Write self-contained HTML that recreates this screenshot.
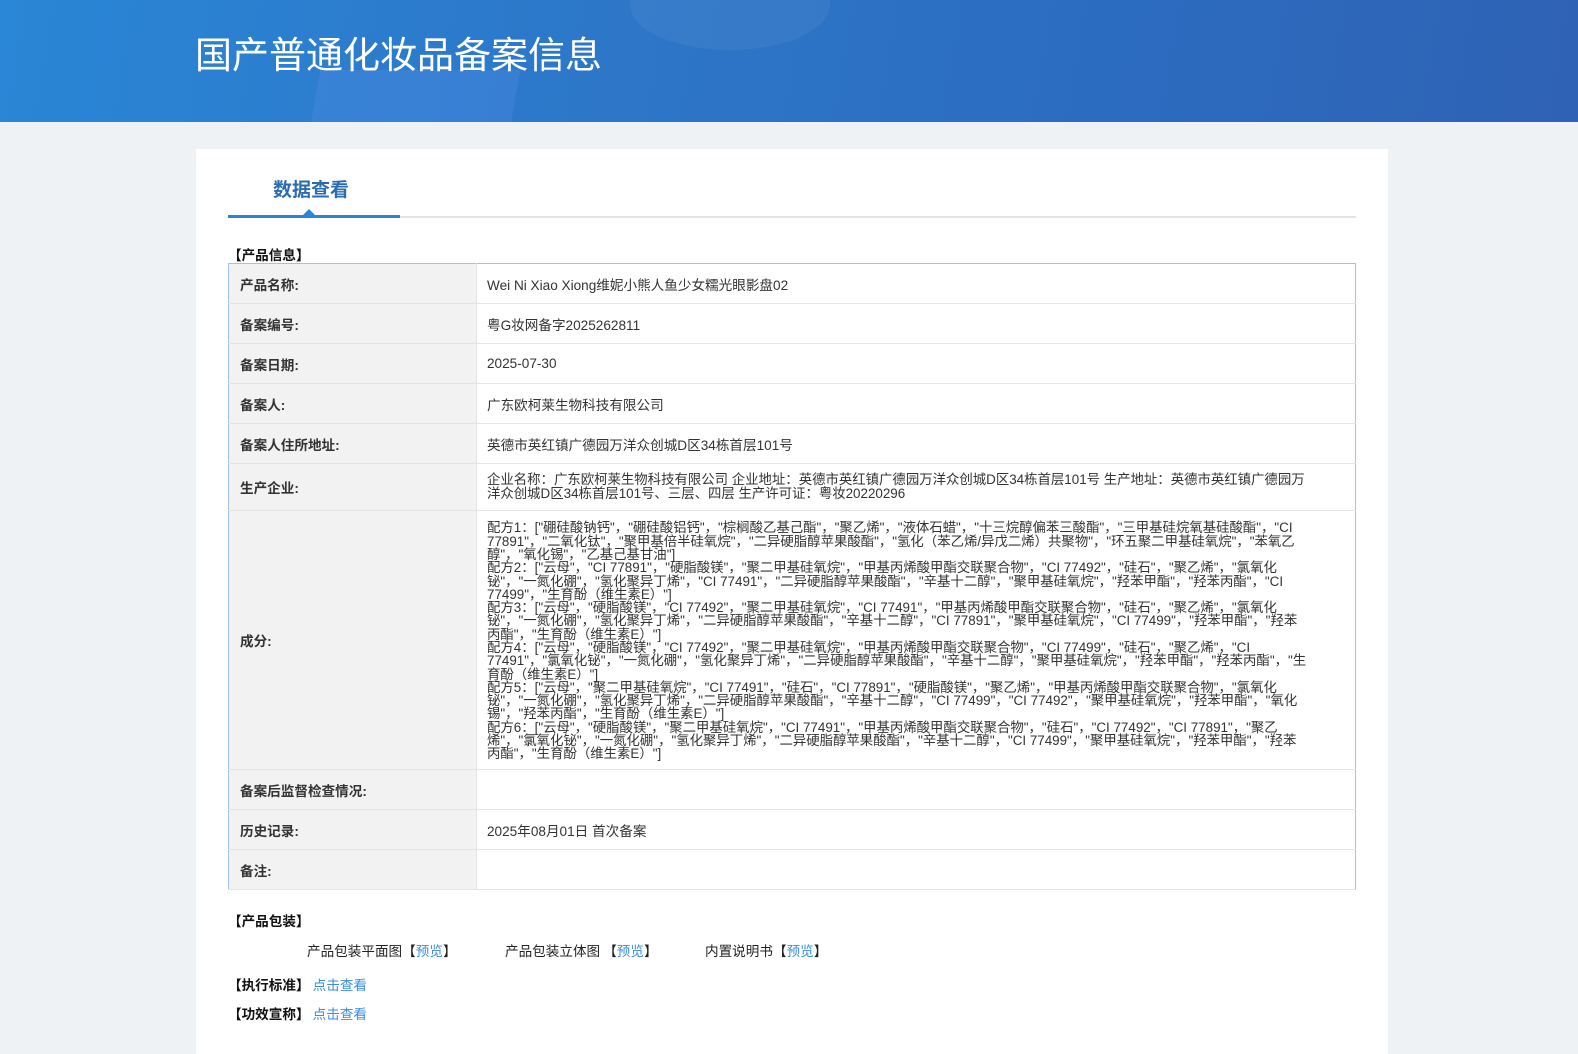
<!DOCTYPE html>
<html><head><meta charset="utf-8"><style>
*{margin:0;padding:0;box-sizing:border-box}
body{width:1578px;height:1054px;overflow:hidden;background:#eef2f5;font-family:"Liberation Sans","Noto Sans CJK SC",sans-serif;color:#333;position:relative}
.hdr{position:absolute;left:0;top:0;width:1578px;height:122px;background:linear-gradient(100deg,#2a86d6 0%,#2d76c8 40%,#2c6cc0 70%,#2f62b4 100%);overflow:hidden}
.hdr .s1{position:absolute;left:315px;top:70px;width:200px;height:60px;background:rgba(80,140,230,.35);transform:skewX(-10deg)}
.hdr .s2{position:absolute;left:630px;top:-40px;width:200px;height:90px;border-radius:50%;background:rgba(255,255,255,.05)}
.hdr h1{position:absolute;left:195px;top:25px;font-size:37px;font-weight:normal;color:#fff;font-family:"Noto Sans CJK SC",sans-serif}
.card{position:absolute;left:196px;top:149px;width:1192px;height:905px;background:#fff}
.tab{position:absolute;left:273px;top:175px;font-size:19px;font-weight:bold;color:#2a6cb0;font-family:"Noto Sans CJK SC",sans-serif}
.line{position:absolute;left:228px;top:216px;width:1128px;height:2px;background:#e4e4e4}
.line2{position:absolute;left:228px;top:215px;width:172px;height:3px;background:#2a85d6}
.tri{position:absolute;left:303px;top:209px;width:0;height:0;border-left:6px solid transparent;border-right:6px solid transparent;border-bottom:6px solid #2a85d6}
.sec{position:absolute;left:228px;font-size:13.6px;font-weight:bold;color:#111;font-family:"Noto Sans CJK SC",sans-serif}
table{position:absolute;left:228px;top:263px;width:1128px;border-collapse:collapse;border:1px solid #9ec2ea;font-size:13.6px;font-family:"Liberation Sans","Noto Sans CJK SC",sans-serif}
td{border-bottom:1px solid #e4e4e4;vertical-align:middle}
td.l{width:248px;background:#f2f2f2;font-weight:bold;padding-left:11px;color:#333;border-right:1px solid #e4e4e4}
td.v{padding-left:10px;color:#333}
.ing{font-size:13.4px;line-height:13.3px;width:820px;padding:10px 0 8px}
.pk{position:absolute;top:940px;font-size:13.6px;color:#222;font-family:"Noto Sans CJK SC",sans-serif}
.lk{color:#3a8ee0;font-weight:normal}
</style></head><body>
<div class="hdr"><div class="s1"></div><div class="s2"></div><h1>国产普通化妆品备案信息</h1></div>
<div class="card"></div>
<div class="tab">数据查看</div>
<div class="line"></div><div class="line2"></div><div class="tri"></div>
<div class="sec" style="top:244px">【产品信息】</div>
<table>
<tr style="height:40px"><td class="l">产品名称:</td><td class="v">Wei Ni Xiao Xiong维妮小熊人鱼少女糯光眼影盘02</td></tr>
<tr style="height:40px"><td class="l">备案编号:</td><td class="v">粤G妆网备字2025262811</td></tr>
<tr style="height:40px"><td class="l">备案日期:</td><td class="v">2025-07-30</td></tr>
<tr style="height:40px"><td class="l">备案人:</td><td class="v">广东欧柯莱生物科技有限公司</td></tr>
<tr style="height:40px"><td class="l">备案人住所地址:</td><td class="v">英德市英红镇广德园万洋众创城D区34栋首层101号</td></tr>
<tr style="height:47px"><td class="l">生产企业:</td><td class="v"><div style="width:820px;line-height:14px;font-size:13.4px">企业名称：广东欧柯莱生物科技有限公司 企业地址：英德市英红镇广德园万洋众创城D区34栋首层101号 生产地址：英德市英红镇广德园万洋众创城D区34栋首层101号、三层、四层 生产许可证：粤妆20220296</div></td></tr>
<tr style="height:259px"><td class="l">成分:</td><td class="v"><div class="ing">配方1：["硼硅酸钠钙"，"硼硅酸铝钙"，"棕榈酸乙基己酯"，"聚乙烯"，"液体石蜡"，"十三烷醇偏苯三酸酯"，"三甲基硅烷氧基硅酸酯"，"CI 77891"，"二氧化钛"，"聚甲基倍半硅氧烷"，"二异硬脂醇苹果酸酯"，"氢化（苯乙烯/异戊二烯）共聚物"，"环五聚二甲基硅氧烷"，"苯氧乙醇"，"氧化锡"，"乙基己基甘油"]<br>配方2：["云母"，"CI 77891"，"硬脂酸镁"，"聚二甲基硅氧烷"，"甲基丙烯酸甲酯交联聚合物"，"CI 77492"，"硅石"，"聚乙烯"，"氯氧化铋"，"一氮化硼"，"氢化聚异丁烯"，"CI 77491"，"二异硬脂醇苹果酸酯"，"辛基十二醇"，"聚甲基硅氧烷"，"羟苯甲酯"，"羟苯丙酯"，"CI 77499"，"生育酚（维生素E）"]<br>配方3：["云母"，"硬脂酸镁"，"CI 77492"，"聚二甲基硅氧烷"，"CI 77491"，"甲基丙烯酸甲酯交联聚合物"，"硅石"，"聚乙烯"，"氯氧化铋"，"一氮化硼"，"氢化聚异丁烯"，"二异硬脂醇苹果酸酯"，"辛基十二醇"，"CI 77891"，"聚甲基硅氧烷"，"CI 77499"，"羟苯甲酯"，"羟苯丙酯"，"生育酚（维生素E）"]<br>配方4：["云母"，"硬脂酸镁"，"CI 77492"，"聚二甲基硅氧烷"，"甲基丙烯酸甲酯交联聚合物"，"CI 77499"，"硅石"，"聚乙烯"，"CI 77491"，"氯氧化铋"，"一氮化硼"，"氢化聚异丁烯"，"二异硬脂醇苹果酸酯"，"辛基十二醇"，"聚甲基硅氧烷"，"羟苯甲酯"，"羟苯丙酯"，"生育酚（维生素E）"]<br>配方5：["云母"，"聚二甲基硅氧烷"，"CI 77491"，"硅石"，"CI 77891"，"硬脂酸镁"，"聚乙烯"，"甲基丙烯酸甲酯交联聚合物"，"氯氧化铋"，"一氮化硼"，"氢化聚异丁烯"，"二异硬脂醇苹果酸酯"，"辛基十二醇"，"CI 77499"，"CI 77492"，"聚甲基硅氧烷"，"羟苯甲酯"，"氧化锡"，"羟苯丙酯"，"生育酚（维生素E）"]<br>配方6：["云母"，"硬脂酸镁"，"聚二甲基硅氧烷"，"CI 77491"，"甲基丙烯酸甲酯交联聚合物"，"硅石"，"CI 77492"，"CI 77891"，"聚乙烯"，"氯氧化铋"，"一氮化硼"，"氢化聚异丁烯"，"二异硬脂醇苹果酸酯"，"辛基十二醇"，"CI 77499"，"聚甲基硅氧烷"，"羟苯甲酯"，"羟苯丙酯"，"生育酚（维生素E）"]</div></td></tr>
<tr style="height:40px"><td class="l">备案后监督检查情况:</td><td class="v"></td></tr>
<tr style="height:40px"><td class="l">历史记录:</td><td class="v">2025年08月01日 首次备案</td></tr>
<tr style="height:40px"><td class="l">备注:</td><td class="v"></td></tr>
</table>
<div class="sec" style="top:910px">【产品包装】</div>
<div class="pk" style="left:307px">产品包装平面图【<span class="lk">预览</span>】</div>
<div class="pk" style="left:505px">产品包装立体图 【<span class="lk">预览</span>】</div>
<div class="pk" style="left:705px">内置说明书【<span class="lk">预览</span>】</div>
<div class="sec" style="top:974px">【执行标准】 <span class="lk">点击查看</span></div>
<div class="sec" style="top:1003px">【功效宣称】 <span class="lk">点击查看</span></div>
</body></html>
